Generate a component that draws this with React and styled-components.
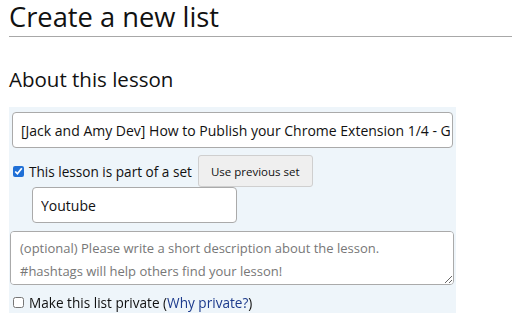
import styled, { createGlobalStyle } from "styled-components";

const GlobalStyle = createGlobalStyle`
  body {
    margin: 0;
    background: #fff;
    font-family: "Open Sans", "DejaVu Sans", sans-serif;
    color: #111;
  }
`;

const Page = styled.div`
  width: 512px;
  height: 320px;
  overflow: hidden;
  padding: 0 0 0 9px;
  box-sizing: border-box;
`;

const Title = styled.h1`
  margin: -2px 0 0 0;
  padding: 0 0 1px 0;
  font-size: 27.3px;
  font-weight: 400;
  line-height: 37px;
  border-bottom: 1px solid #a8a8a8;
`;

const SubTitle = styled.h2`
  margin: 28px 0 14px 0;
  font-size: 20.5px;
  font-weight: 400;
  line-height: 28px;
`;

const Panel = styled.div`
  width: 447px;
  height: 206px;
  background: #eef5fa;
  padding: 5px 3px 0 3px;
  box-sizing: border-box;
  display: flex;
  flex-direction: column;
`;

const TextInput = styled.input`
  box-sizing: border-box;
  width: ${(p) => p.$width};
  height: 36px;
  margin-left: ${(p) => p.$indent || "0"};
  border: 1px solid #aaa;
  border-radius: 4px;
  padding: 0 2px 0 8px;
  font-family: "Open Sans", sans-serif;
  font-size: 14px;
  color: #111;
  background: #fff;
  outline: none;
`;

const Row = styled.div`
  display: flex;
  align-items: center;
  gap: 5px;
  height: ${(p) => p.$height};
  margin-top: ${(p) => p.$top || "0"};
  font-size: 13.6px;
`;

const Check = styled.input`
  margin: 0 0 0 1px;
  width: 11px;
  height: 11px;
  accent-color: #1f6fd6;
`;

const Button = styled.button`
  height: 32px;
  padding: 0 12px;
  margin-left: 1px;
  border: 1px solid #cfcfcf;
  border-radius: 3px;
  background: #efefef;
  font-family: "Open Sans", sans-serif;
  font-size: 11.5px;
  color: #111;
`;

const TextArea = styled.textarea`
  box-sizing: border-box;
  width: 444px;
  height: 54px;
  margin: 8px 0 0 -2px;
  border: 1px solid #aaa;
  border-radius: 4px;
  padding: 5px 9px;
  font-family: "Open Sans", sans-serif;
  font-size: 13px;
  line-height: 23px;
  resize: vertical;
  background: #fff;
  &::placeholder {
    color: #777;
  }
`;

const Link = styled.a`
  color: #1c3a8c;
  text-decoration: none;
`;

export default function App() {
  return (
    <>
      <GlobalStyle />
      <Page>
        <Title>Create a new list</Title>
        <SubTitle>About this lesson</SubTitle>
        <Panel>
          <TextInput
            $width="441px"
            defaultValue="[Jack and Amy Dev] How to Publish your Chrome Extension 1/4 - Getting started"
          />
          <Row $top="7px" $height="32px">
            <Check type="checkbox" defaultChecked />
            <span>This lesson is part of a set</span>
            <Button>Use previous set</Button>
          </Row>
          <TextInput $width="205px" $indent="20px" defaultValue="Youtube" />
          <TextArea placeholder="(optional) Please write a short description about the lesson. #hashtags will help others find your lesson!" />
          <Row $top="7px" $height="21px">
            <Check type="checkbox" />
            <span>
              Make this list private (<Link href="#">Why private?</Link>)
            </span>
          </Row>
        </Panel>
      </Page>
    </>
  );
}
